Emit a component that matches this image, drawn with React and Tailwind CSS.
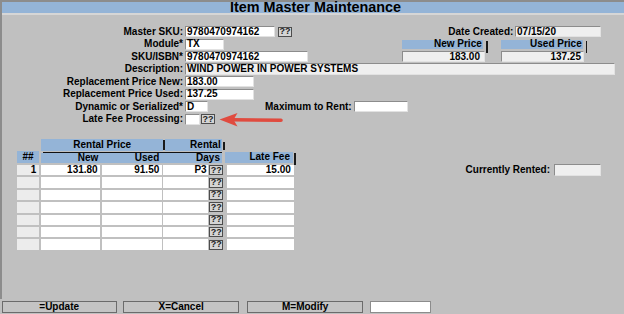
import React from "react";

function Box({ className = "", ro = false, right = false, children }) {
  return (
    <div
      className={`flex h-[11px] shrink-0 items-center border border-t-[#8c8c8c] border-l-[#8c8c8c] border-r-[#e2e2e2] border-b-[#e2e2e2] px-[1px] leading-none ${
        ro ? "bg-[#efefef]" : "bg-white"
      } ${right ? "justify-end" : ""} ${className}`}
    >
      {children}
    </div>
  );
}

function Look({ className = "" }) {
  return (
    <div
      className={`flex h-[10px] w-[14px] shrink-0 items-center justify-center border border-[#4d4d4d] bg-[#d4d4d4] text-[9px] leading-none text-[#222] ${className}`}
    >
      ??
    </div>
  );
}

function Label({ children }) {
  return <div className="w-[181px] shrink-0 text-right leading-none">{children}</div>;
}

function Row({ children }) {
  return <div className="flex h-[12.5px] items-center">{children}</div>;
}

const RENTALS = [
  { n: "1", newP: "131.80", used: "91.50", days: "P3", fee: "15.00" },
  {}, {}, {}, {}, {}, {},
];

export default function App() {
  return (
    <div className="relative flex h-[314px] w-[624px] flex-col bg-[#c0c0c0] font-['Liberation_Sans',Arial,sans-serif] text-[10px] font-bold text-black">
      <div className="h-[1.5px] shrink-0 bg-[#8c8c8c]" />
      <div className="flex flex-1 flex-col border-l-2 border-[#8c8c8c]">
        {/* title */}
        <div className="flex h-[11.8px] items-center justify-center bg-[#94b4d7] pl-[5px] text-[14.4px] leading-none">
          Item Master Maintenance
        </div>
        <div className="h-[1.3px] bg-[#d6d6d6]" />

        {/* header form */}
        <div className="mt-[10.85px] flex flex-col">
          <Row>
            <Label>Master SKU:</Label>
            <Box className="ml-[2px] w-[90px]">9780470974162</Box>
            <Look className="ml-[3px]" />
            <div className="flex-1" />
            <div className="leading-none">Date Created:</div>
            <Box ro className="ml-[1.7px] w-[85.7px]">07/15/20</Box>
            <div className="w-[23.3px] shrink-0" />
          </Row>
          <Row>
            <Label>Module*</Label>
            <Box className="ml-[2px] w-[39px]">TX</Box>
            <div className="ml-[177.7px] flex h-[9.3px] w-[81.6px] shrink-0 items-center justify-end bg-[#94b4d7] pr-[1.5px] leading-none">
              New Price
            </div>
            <div className="ml-[2.7px] mt-[2.75px] h-[12px] w-[2px] shrink-0 self-start bg-[#1a1a1a]" />
            <div className="ml-[12.7px] flex h-[9.3px] w-[82.6px] shrink-0 items-center justify-end bg-[#94b4d7] pr-[1.5px] leading-none">
              Used Price
            </div>
            <div className="ml-[2.4px] mt-[2.75px] h-[12px] w-[1.8px] shrink-0 self-start bg-[#1a1a1a]" />
          </Row>
          <Row>
            <Label>SKU/ISBN*</Label>
            <Box className="ml-[2px] w-[123px]">9780470974162</Box>
            <Box ro right className="ml-[93.7px] w-[83.3px] pr-[4px]">183.00</Box>
            <Box ro right className="ml-[15.7px] w-[83.3px] pr-[2px]">137.25</Box>
          </Row>
          <Row>
            <Label>Description:</Label>
            <Box ro className="ml-[2px] h-[12px] w-[430px]">WIND POWER IN POWER SYSTEMS</Box>
          </Row>
          <Row>
            <Label>Replacement Price New:</Label>
            <Box className="ml-[2px] w-[69px]">183.00</Box>
          </Row>
          <Row>
            <Label>Replacement Price Used:</Label>
            <Box className="ml-[2px] w-[69px]">137.25</Box>
          </Row>
          <Row>
            <Label>Dynamic or Serialized*</Label>
            <Box className="ml-[2px] w-[23.3px]">D</Box>
            <div className="ml-[56.7px] leading-none">Maximum to Rent:</div>
            <Box className="ml-[2.6px] w-[54px]" />
          </Row>
          <Row>
            <Label>Late Fee Processing:</Label>
            <Box className="ml-[2px] w-[15px]" />
            <Look className="ml-[1px]" />
          </Row>
        </div>

        {/* rental table */}
        <div className="mt-[13.85px] flex flex-col">
          <div className="flex h-[11.7px] items-center">
            <div className="ml-[39px] flex h-full w-[122.3px] items-center justify-center bg-[#94b4d7] leading-none">
              Rental Price
            </div>
            <div className="h-[10px] w-[1.7px] bg-[#1a1a1a]" />
            <div className="flex h-full w-[56.7px] items-center justify-end bg-[#94b4d7] pr-[1px] leading-none">
              Rental
            </div>
            <div className="ml-[1.6px] mt-[2px] h-[8.3px] w-[1.7px] bg-[#1a1a1a]" />
          </div>
          <div className="flex h-[12px] items-start">
            <div className="ml-[14.7px] flex h-[11.7px] w-[22.6px] items-center justify-center bg-[#94b4d7] leading-none">
              ##
            </div>
            <div className="ml-[1.4px] mt-[0.7px] flex w-[181px] flex-col">
              <div className="ml-[2px] h-[1.8px] bg-[#111]" />
              <div className="flex h-[9.2px] items-center bg-[#94b4d7] leading-none">
                <div className="w-[60px] pr-[2.4px] text-right">New</div>
                <div className="w-[62.6px] pr-[4px] text-right">Used</div>
                <div className="flex-1 pr-[1.7px] text-right">Days</div>
              </div>
            </div>
            <div className="ml-[3.3px] mt-[0.7px] flex h-[11.6px] w-[68.3px] items-center justify-end bg-[#94b4d7] pr-[3.3px] leading-none">
              Late Fee
            </div>
            <div className="ml-[0.7px] mt-[2px] h-[12px] w-[2px] bg-[#1a1a1a]" />
          </div>
          {RENTALS.map((r, i) => (
            <div key={i} className="mt-[2px] flex h-[10.4px] items-center">
              <div className="ml-[14.7px] flex h-full w-[22.6px] items-center justify-end bg-[#ececec] pr-[3px] leading-none">
                {r.n}
              </div>
              <div className="ml-[1.4px] flex h-full w-[59.3px] items-center justify-end bg-white pr-[2.3px] leading-none">
                {r.newP}
              </div>
              <div className="ml-[1.7px] flex h-full w-[60px] items-center justify-end bg-white pr-[2.4px] leading-none">
                {r.used}
              </div>
              <div className="ml-[1.6px] flex h-full w-[45px] items-center justify-end bg-white pr-[1.6px] leading-none">
                {r.days}
              </div>
              <Look className="ml-[1px] h-[9.4px] w-[12.4px]" />
              <div className="ml-[3.3px] flex h-full w-[67.7px] items-center justify-end bg-white pr-[3.4px] leading-none">
                {r.fee}
              </div>
              {i === 0 ? (
                <>
                  <div className="flex-1" />
                  <div className="leading-none">Currently Rented:</div>
                  <Box ro className="ml-[4px] h-[12px] w-[46.7px]" />
                  <div className="w-[23.3px] shrink-0" />
                </>
              ) : null}
            </div>
          ))}
        </div>
      </div>

      {/* action bar */}
      <div className="flex h-[15.3px] shrink-0 items-start pt-[2px]">
        <div className="ml-[1.7px] flex h-[12.6px] w-[115px] items-center justify-center border border-[#6b6b6b] bg-[#c4c4c4] leading-none">
          =Update
        </div>
        <div className="ml-[6.6px] flex h-[12.6px] w-[115.7px] items-center justify-center border border-[#6b6b6b] bg-[#c4c4c4] leading-none">
          X=Cancel
        </div>
        <div className="ml-[8.5px] flex h-[12.6px] w-[115.5px] items-center justify-center border border-[#6b6b6b] bg-[#c4c4c4] leading-none">
          M=Modify
        </div>
        <div className="ml-[7px] h-[12.6px] w-[61px] border border-[#8c8c8c] bg-white" />
      </div>

      {/* callout arrow */}
      <svg className="pointer-events-none absolute left-[218px] top-[111px]" width="68" height="17" viewBox="0 0 68 17">
        <line x1="14" y1="8.8" x2="63" y2="9.2" stroke="#e04b3f" strokeWidth="3.6" strokeLinecap="round" />
        <polygon points="1.5,8.5 19.5,2 15.5,8.7 19.5,15.5" fill="#e04b3f" />
      </svg>
    </div>
  );
}
